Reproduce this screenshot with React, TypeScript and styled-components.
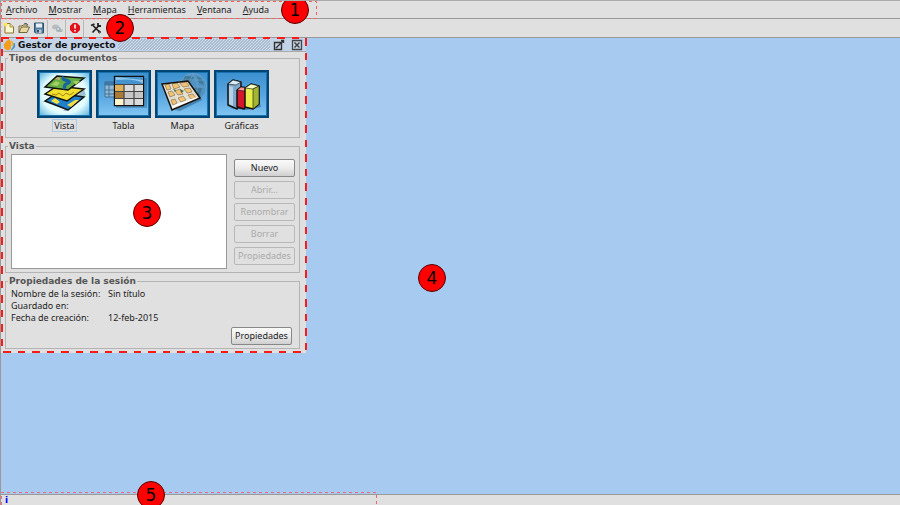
import React from 'react';
import styled, { createGlobalStyle, css } from 'styled-components';

const GlobalStyle = createGlobalStyle`
  *, *::before, *::after { box-sizing: border-box; }
  body { margin: 0; background: #a6caf0; overflow: hidden; }
  body, button { font-family: "Noto Sans", "DejaVu Sans", sans-serif; font-size: 9px; line-height: 12px; color: #222; }
`;

const Screen = styled.div`
  position: relative;
  display: flex;
  flex-direction: column;
  height: 100vh;
  border-left: 1px solid #999;
  border-top: 1px solid #aaa;
  overflow: hidden;
`;

const MenuBar = styled.nav`
  display: flex;
  align-items: center;
  gap: 11px;
  height: 18px;
  padding-left: 5px;
  background: #e0e0e0;
  border-bottom: 1px solid #999;
`;

const MenuItem = styled.button`
  border: 0;
  padding: 0;
  background: none;
  white-space: nowrap;
  &::first-letter { text-decoration: underline; }
`;

const ToolBar = styled.div`
  display: flex;
  align-items: center;
  height: 19px;
  background: #e0e0e0;
  border-bottom: 1px solid #999;
`;

const ToolButton = styled.button<{ $wide?: boolean }>`
  display: grid;
  place-items: center;
  width: ${p => (p.$wide ? 22 : 15)}px;
  height: 16px;
  border: 0;
  padding: 0;
  background: none;
`;

const Divider = styled.span`
  width: 1px;
  height: 17px;
  margin: 0 1px;
  background: #b8b8b8;
`;

const Desktop = styled.main`
  flex: 1;
  display: flex;
  align-items: flex-start;
  background: #a6caf0;
`;

const Frame = styled.section`
  width: 305px;
  padding-bottom: 2px;
  background: #e0e0e0;
`;

const TitleBar = styled.header`
  display: flex;
  align-items: center;
  height: 14px;
  padding: 0 3px 0 2px;
  background: #c3d4e8;
  border-bottom: 1px solid #aaa;
`;

const Title = styled.h1`
  margin: 0 3px 0 2px;
  font: bold 9px/12px "DejaVu Sans", sans-serif;
  color: #111;
`;

const Grip = styled.span`
  flex: 1;
  height: 11px;
  margin-right: 3px;
  background: linear-gradient(135deg, #a9bbcf 25%, #d0dfef 25% 50%, #a9bbcf 50% 75%, #d0dfef 75%) 0 0 / 3px 3px;
`;

const TitleButton = styled.button`
  display: grid;
  width: 12px;
  height: 12px;
  margin-left: 6px;
  border: 0;
  padding: 0;
  background: none;
  &:first-of-type { margin-left: 0; }
`;

const Group = styled.fieldset`
  min-width: 0;
  margin: 0 6px 2px 4px;
  border: 1px solid #b4b4b4;
  padding: 0 4px 3px 5px;
`;

const Legend = styled.legend`
  margin-left: -3px;
  padding: 0 1px;
  font: bold 9px/12px "DejaVu Sans", sans-serif;
  color: #555;
`;

const Types = styled.div`
  display: flex;
  justify-content: center;
  gap: 4px;
  padding-top: 6px;
`;

const TypeButton = styled.button<{ $active?: boolean }>`
  display: flex;
  flex-direction: column;
  align-items: center;
  gap: 1px;
  width: 55px;
  border: 0;
  padding: 0 0 2px;
  background: none;
  & > span {
    padding: 0 1px;
    border: 1px solid ${p => (p.$active ? '#a9cbe8' : 'transparent')};
    line-height: 11px;
  }
`;

const Documents = styled.div`
  display: flex;
  gap: 7px;
  padding-top: 2px;
`;

const List = styled.div`
  flex: 1;
  height: 115px;
  border: 1px solid #999;
  background: #fff;
`;

const Actions = styled.div`
  display: flex;
  flex-direction: column;
  gap: 4px;
  width: 61px;
  padding-top: 5px;
`;

const Button = styled.button`
  width: 61px;
  height: 18px;
  border: 1px solid #888;
  border-radius: 2px;
  padding: 0;
  background: linear-gradient(#fafafa, #ececec 50%, #cfcfcf);
  white-space: nowrap;
  ${p => p.disabled && css`
    border-color: #b8b8b8;
    background: #e0e0e0;
    color: #aaa;
  `}
`;

const Session = styled.dl`
  display: grid;
  grid-template-columns: 97px 1fr;
  margin: 1px 0 3px;
`;
const Term = styled.dt``;
const Value = styled.dd`
  margin: 0;
`;

const Footer = styled.div`
  display: flex;
  justify-content: flex-end;
  padding-right: 3px;
`;

const StatusBar = styled.footer`
  height: 11px;
  padding-left: 4px;
  background: #e0e0e0;
  border-top: 1px solid #999;
  color: #00f;
  font: bold 9px/10px "DejaVu Sans", sans-serif;
`;

const Outline = styled.svg<{ $x: number; $y: number }>`
  position: absolute;
  left: ${p => p.$x}px;
  top: ${p => p.$y}px;
  overflow: visible;
  pointer-events: none;
  fill: none;
`;

const Marker = styled.span<{ $x: number; $y: number }>`
  position: absolute;
  left: ${p => p.$x}px;
  top: ${p => p.$y}px;
  display: grid;
  place-items: center;
  width: 28px;
  height: 28px;
  border: 1px solid #500;
  border-radius: 50%;
  background: #f00;
  color: #000;
  font: 17px/20px "DejaVu Sans", sans-serif;
`;

const NewIcon = () => (
  <svg width="12" height="12" viewBox="0 0 12 12">
    <path d="M2 1.500h5l3.500 3.500v6H2z" fill="#fff8cf" stroke="#8a7430" />
    <path d="M7 1.500v3.500h3.500" fill="#e8d68c" stroke="#8a7430" strokeWidth=".7" />
    <circle cx="2.500" cy="2.500" r="2" fill="#ffe45c" />
  </svg>
);
const OpenIcon = () => (
  <svg width="12" height="12" viewBox="0 0 12 12">
    <path d="M1 10.500V4h3l1-1h4v2" fill="#f1e3ae" stroke="#75683f" />
    <path d="M1 10.500 3.500 5H11.500L9 10.500z" fill="#e8d8a4" stroke="#75683f" />
    <path d="M6 2q2-2 4 1" fill="none" stroke="#555" />
  </svg>
);
const SaveIcon = () => (
  <svg width="12" height="12" viewBox="0 0 12 12">
    <path d="M1.500 1h9v10h-8l-1-1z" fill="#507ca0" stroke="#31536e" />
    <path d="M3 1.500h6v4H3z" fill="#e7edf2" />
    <path d="M3.500 7.500h5V11h-5z" fill="#b9c9d5" />
    <path d="M4 8h2v2.500H4z" fill="#31536e" />
  </svg>
);
const LinkIcon = () => (
  <svg width="12" height="12" viewBox="0 0 12 12">
    <ellipse cx="4.500" cy="5" rx="3.500" ry="2.500" fill="#b9bcbe" />
    <circle cx="7.500" cy="7.500" r="2.500" fill="#9fb0ba" />
    <circle cx="7" cy="7" r="1" fill="#d9e4df" />
    <path d="M9 9.500h2V7" fill="none" stroke="#9db89f" />
  </svg>
);
const AlertIcon = () => (
  <svg width="12" height="12" viewBox="0 0 12 12">
    <path d="M4 1h4l3 3v4l-3 3H4L1 8V4z" fill="#e4131b" />
    <path d="M6 2.500v4M6 8v1.500" stroke="#fff" strokeWidth="1.600" />
  </svg>
);
const ToolsIcon = () => (
  <svg width="12" height="12" viewBox="0 0 12 12" fill="none" stroke="#222">
    <path d="m3 3.500 6.500 6.500M8 4.500 2.500 10.500" strokeWidth="1.700" />
    <path d="M1 3.500 4.500 2M8 1v3h3" strokeWidth="1.800" />
    <circle cx="9.500" cy="10" r="1" strokeWidth="1" />
  </svg>
);
const AppIcon = () => (
  <svg width="13" height="12" viewBox="0 0 13 12">
    <path d="M6 0C4 2 0 4 1 8c1 4 6 4 7 1V3z" fill="#f59c18" />
    <path d="M8 2c2 1 2 3 1 5" fill="none" stroke="#f6b22b" strokeWidth="1.600" />
    <path d="M11 4c2 3 0 6-3 7 2-2 3-4 3-7" fill="#3d8bc0" stroke="#3d8bc0" strokeWidth=".6" />
  </svg>
);
const MaximizeIcon = () => (
  <svg width="12" height="12" viewBox="0 0 12 12" fill="none" stroke="#333">
    <path d="M1.500 3.500h7v7h-7z" strokeWidth="1.400" />
    <path d="m3 9 7-7M8 1.500h2.500V4" strokeWidth="1.400" />
  </svg>
);
const CloseIcon = () => (
  <svg width="12" height="12" viewBox="0 0 12 12" fill="none" stroke="#444">
    <path d="M1.500 1.500h9v9h-9z" strokeWidth="1.300" />
    <path d="m3.500 3.500 5 5m0-5-5 5" strokeWidth="1.500" />
  </svg>
);

const Tile = ({ id, glow, children }: { id: string; glow?: boolean; children: React.ReactNode }) => (
  <svg width="55" height="48" viewBox="0 0 55 48">
    <defs>
      <linearGradient id={id} x2="0" y2="1">
        <stop stopColor="#3a8fce" />
        <stop offset=".55" stopColor="#5aa6e0" />
        <stop offset="1" stopColor="#83c8f5" />
      </linearGradient>
      <radialGradient id={`${id}-glow`} r=".7">
        <stop stopColor="#fff" />
        <stop offset=".6" stopColor="#e2fcff" />
        <stop offset="1" stopColor="#43a5d7" />
      </radialGradient>
    </defs>
    <rect x="1" y="1" width="53" height="46" fill={`url(#${id}${glow ? '-glow' : ''})`} stroke="#004675" strokeWidth="2" />
    <rect x="2.500" y="2.500" width="50" height="43" fill="none" stroke="#1971ad" />
    {children}
  </svg>
);

const LayersArt = () => (
  <Tile id="layers" glow>
    <path d="m26 41 5 0 18-16-2-6z" fill="#568ca4" opacity=".5" />
    <path d="m8 31 12-8 27 4-16 13z" fill="#1f80cc" stroke="#111" strokeWidth="1.500" />
    <path d="m14 31 4-3 5 4-3 2zM30 35l8-5 4 0-8 7z" fill="#f3df42" />
    <path d="m8 24 12-8 27 3-17 12z" fill="#f2df2e" stroke="#111" strokeWidth="1.500" />
    <path d="m15 24 4 1 3-2 4 3 3-3 4 2 4-3" fill="none" stroke="#a78410" />
    <path d="m8 17 12-11 27 2-16 12z" fill="#62ad45" stroke="#111" strokeWidth="1.500" />
    <path d="M27 7c-4 4 9 3 4 6q-5 2-3 6" fill="none" stroke="#17649c" strokeWidth="3.500" />
    <path d="m14 15 5-4 4 2-3 3zM36 11l7 0-4 4z" fill="#a6cf60" />
    <path d="m18 9 4-2 1 3z" fill="#e2a87b" />
  </Tile>
);
const TableArt = () => (
  <Tile id="table">
    <path d="M9 12h11v15H9z" fill="#94b8d2" stroke="#41759b" />
    <path d="M9 12h10v3H9zM9 20h10M9 24h10M13 15v12" fill="#397ab2" stroke="#41759b" />
    <path d="M20 8h31v30H20z" fill="#235f8b" opacity=".4" />
    <path d="M18.500 6.500h29v29h-29z" fill="#eee" stroke="#111" strokeWidth="1.300" />
    <path d="M19 7h28v7H19z" fill="#4594cf" />
    <path d="m20 7 27 3v3q-9-5-27-3z" fill="#91c8ea" />
    <path d="M19 14h9v7h-9z" fill="#deb15a" />
    <path d="M19 21h9v7h-9z" fill="#aa7a36" />
    <path d="M19 28h9v7h-9z" fill="#fff4cb" />
    <path d="M28 14h19v7H28zM28 28h19v7H28z" fill="#dadada" />
    <path d="M28 21h19v7H28z" fill="#c6c6c6" />
    <path d="M19 14.500h28M19 21.500h28M19 28.500h28M28 14v21M38 14v21" stroke="#444" strokeWidth="1.200" />
  </Tile>
);
const Globe = () => (
  <g fill="none" stroke="#6fa3c6">
    <circle cx="38" cy="17" r="13.500" fill="#4f93c4" />
    <path d="M30 6q5 0 9 1l-2 4-5 3-4-4zM42 6l5 3 2 6-5-2zM40 17l7 1-2 7-5 3-3-5z" fill="#3d6f8c" stroke="none" opacity=".7" />
    <path d="M38 4q-8 13 0 26M38 4q9 13 0 26M25 17h26M28 10h20" strokeWidth=".7" />
  </g>
);
const MapArt = () => (
  <Tile id="map">
    <Globe />
    <path d="m20 40 5 1 22-11-3-6z" fill="#123e60" opacity=".4" />
    <path d="m7 14 26-3 12 17-28 12z" fill="#e3dfd2" />
    <g fill="#f3c373" stroke="#8a7750" strokeWidth=".7">
      <path d="m10 15 4-1 2 5-4 1zM17 14l5-1 3 4-6 2zM25 13l6-1 3 4-6 1z" />
      <path d="m13 22 4-1 3 4-5 2zM20 21l5-2 3 5-5 1zM29 19l6-1 2 4-5 1z" />
      <path d="m16 30 4-1 2 4-4 2zM23 28l5-2 3 4-5 2zM33 25l5-1 3 4-5 1z" />
    </g>
    <path d="m17 37 25-9" stroke="#fff" strokeWidth="2" />
    <path d="m25 19 4 2-3 2zM18 19l3 1-1 2z" fill="#456b3c" />
    <path d="m7 14 26-3 12 17-28 12z" fill="none" stroke="#18110b" strokeWidth="1.500" />
  </Tile>
);
const ChartArt = () => (
  <Tile id="chart">
    <path d="m16 38 16 2 15-3-2-7z" fill="#174a70" opacity=".5" />
    <g stroke="#111" strokeLinejoin="round">
      <path d="m14 14 5-4 8 2v22l-4 5-9-4z" fill="#7fa9ca" strokeWidth="1.500" />
      <path d="m14 14 8 1 5-3-8-2z" fill="#d9ecf8" strokeWidth=".6" />
      <path d="m15 16 4 1v19l-4-2z" fill="#b7d2e6" stroke="none" />
      <path d="m23 20 4-3 7 1v16l-4 5-7-2z" fill="#d5172b" strokeWidth="1.500" />
      <path d="m23 20 7 1 4-3-7-1z" fill="#ff9794" strokeWidth=".6" />
      <path d="m31 18 6-4 8 2v18l-6 5-8-2z" fill="#e7ed49" strokeWidth="1.500" />
      <path d="m31 18 8 1 6-3-8-2z" fill="#fbffc4" strokeWidth=".6" />
      <path d="m39 19 6-3v18l-6 5z" fill="#a3b633" strokeWidth=".6" />
    </g>
  </Tile>
);

const menus = ['Archivo', 'Mostrar', 'Mapa', 'Herramientas', 'Ventana', 'Ayuda'];
const types = [
  { label: 'Vista', Art: LayersArt },
  { label: 'Tabla', Art: TableArt },
  { label: 'Mapa', Art: MapArt },
  { label: 'Gráficas', Art: ChartArt },
];
const actions = ['Nuevo', 'Abrir...', 'Renombrar', 'Borrar', 'Propiedades'];
const markers = [
  { n: 1, x: 280, y: -5 },
  { n: 2, x: 105, y: 13 },
  { n: 3, x: 132, y: 198 },
  { n: 4, x: 417, y: 263 },
  { n: 5, x: 136, y: 480 },
];

export default function App() {
  return (
    <Screen>
      <GlobalStyle />
      <MenuBar>{menus.map(m => <MenuItem key={m}>{m}</MenuItem>)}</MenuBar>
      <ToolBar>
        <ToolButton aria-label="Nuevo proyecto"><NewIcon /></ToolButton>
        <ToolButton aria-label="Abrir proyecto"><OpenIcon /></ToolButton>
        <ToolButton aria-label="Guardar proyecto"><SaveIcon /></ToolButton>
        <Divider />
        <ToolButton aria-label="Enlace" disabled><LinkIcon /></ToolButton>
        <Divider />
        <ToolButton aria-label="Avisos"><AlertIcon /></ToolButton>
        <Divider />
        <ToolButton aria-label="Preferencias" $wide><ToolsIcon /></ToolButton>
        <Divider />
      </ToolBar>
      <Desktop>
        <Frame>
          <TitleBar>
            <AppIcon />
            <Title>Gestor de proyecto</Title>
            <Grip />
            <TitleButton aria-label="Maximizar"><MaximizeIcon /></TitleButton>
            <TitleButton aria-label="Cerrar"><CloseIcon /></TitleButton>
          </TitleBar>
          <Group>
            <Legend>Tipos de documentos</Legend>
            <Types>
              {types.map(({ label, Art }, i) => (
                <TypeButton key={label} $active={i === 0}><Art /><span>{label}</span></TypeButton>
              ))}
            </Types>
          </Group>
          <Group>
            <Legend>Vista</Legend>
            <Documents>
              <List role="listbox" aria-label="Vista" />
              <Actions>
                {actions.map((a, i) => <Button key={a} disabled={i > 0}>{a}</Button>)}
              </Actions>
            </Documents>
          </Group>
          <Group>
            <Legend>Propiedades de la sesión</Legend>
            <Session>
              <Term>Nombre de la sesión:</Term><Value>Sin título</Value>
              <Term>Guardado en:</Term><Value />
              <Term>Fecha de creación:</Term><Value>12-feb-2015</Value>
            </Session>
            <Footer><Button>Propiedades</Button></Footer>
          </Group>
        </Frame>
      </Desktop>
      <StatusBar>i</StatusBar>
      <Outline $x={0} $y={0} width="316" height="18" stroke="#ff5c5c" strokeDasharray="3 3">
        <path d="M.500 17V.500H315.500V17.500H.500" />
      </Outline>
      <Outline $x={0} $y={18} width="118" height="18" stroke="#f7bcbc" strokeDasharray="2 2">
        <path d="M.500 17V.500H117.500V17" />
      </Outline>
      <Outline $x={0} $y={36} width="306" height="316" stroke="#ff1a1a" strokeWidth="2" strokeDasharray="7 7 8 7">
        <path d="M1 1H305V315H1z" />
      </Outline>
      <Outline $x={0} $y={491} width="376" height="13" stroke="#f06478" strokeDasharray="3 3">
        <path d="M.500 13V.500H375.500V13" />
      </Outline>
      {markers.map(m => <Marker key={m.n} $x={m.x} $y={m.y}>{m.n}</Marker>)}
    </Screen>
  );
}
